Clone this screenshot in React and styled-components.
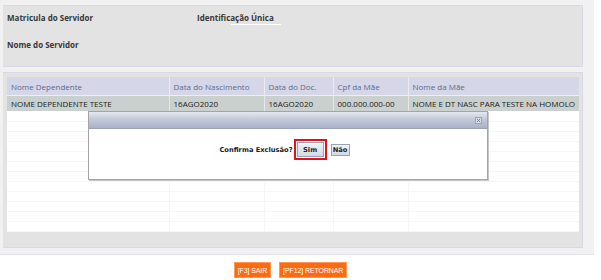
import React from "react";
import styled, { createGlobalStyle } from "styled-components";

const GlobalStyle = createGlobalStyle`
  html, body {
    margin: 0;
    padding: 0;
    background: #ffffff;
  }
  body {
    font-family: "Open Sans", "Liberation Sans", sans-serif;
  }
`;

const columns = [
  { title: "Nome Dependente", width: 162 },
  { title: "Data do Nascimento", width: 95 },
  { title: "Data do Doc.", width: 69 },
  { title: "Cpf da Mãe", width: 75 },
  { title: "Nome da Mãe", width: 171 },
];

const rows = [
  [
    "NOME DEPENDENTE TESTE",
    "16AGO2020",
    "16AGO2020",
    "000.000.000-00",
    "NOME E DT NASC PARA TESTE NA HOMOLO",
  ],
];

const App = () => {
  const emptyRows = Array.from({ length: 12 });

  return (
    <>
      <GlobalStyle />
      <Page>
        <InfoPanel>
          <InfoColumn>
            <Label>Matricula do Servidor</Label>
          </InfoColumn>
          <InfoColumn>
            <Label>Identificação Única</Label>
            <Field />
          </InfoColumn>
          <InfoColumn>
            <Label>Nome do Servidor</Label>
          </InfoColumn>
        </InfoPanel>

        <GridPanel>
          <Table>
            <colgroup>
              {columns.map((c) => (
                <col key={c.title} style={{ width: c.width }} />
              ))}
            </colgroup>
            <thead>
              <tr>
                {columns.map((c) => (
                  <Th key={c.title}>{c.title}</Th>
                ))}
              </tr>
            </thead>
            <tbody>
              {rows.map((r, i) => (
                <DataRow key={i}>
                  {r.map((cell, j) => (
                    <Td key={j}>{cell}</Td>
                  ))}
                </DataRow>
              ))}
              {emptyRows.map((_, i) => (
                <EmptyRow key={"e" + i}>
                  {columns.map((c) => (
                    <EmptyCell key={c.title} />
                  ))}
                </EmptyRow>
              ))}
            </tbody>
          </Table>
        </GridPanel>

        <Dialog>
          <TitleBar>
            <CloseIcon width="7" height="7" viewBox="0 0 7 7">
              <rect x="0.5" y="0.5" width="6" height="6" fill="#d6dae4" stroke="#9ea6b8" />
              <path d="M2 2 L5 5 M5 2 L2 5" stroke="#7d8598" strokeWidth="1" />
            </CloseIcon>
          </TitleBar>
          <DialogBody>
            <Question>Confirma Exclusão?</Question>
            <Focus>
              <DialogButton $big>Sim</DialogButton>
            </Focus>
            <DialogButton>Não</DialogButton>
          </DialogBody>
        </Dialog>
      </Page>

      <Footer>
        <ActionButton>[F3] SAIR</ActionButton>
        <ActionButton>[PF12] RETORNAR</ActionButton>
      </Footer>
    </>
  );
};

export default App;

const Page = styled.div`
  position: relative;
  width: 594px;
  box-sizing: border-box;
  padding: 5px 11px 6px 3px;
  background: #f1f1f1;
  border-bottom: 1px solid #e4e3ea;
  display: flex;
  flex-direction: column;
  gap: 5px;
`;

const InfoPanel = styled.div`
  height: 62px;
  box-sizing: border-box;
  background: #e3e3e3;
  border: 1px solid #dad8e2;
  border-left: none;
  display: grid;
  grid-template-columns: 190px 1fr;
  grid-template-rows: 27px 1fr;
  padding: 7px 0 0 4px;
`;

const InfoColumn = styled.div`
  display: flex;
  flex-direction: column;
`;

const Label = styled.span`
  font-family: "Open Sans", sans-serif;
  font-weight: 700;
  font-size: 8px;
  line-height: 10px;
  color: #383838;
`;

const Field = styled.div`
  width: 50px;
  height: 1px;
  margin: 1px 0 0 34px;
  background: #ffffff;
`;

const GridPanel = styled.div`
  height: 176px;
  box-sizing: border-box;
  background: #e3e3e3;
  border: 1px solid #dad8e2;
  border-left: none;
  padding: 4px 4px 14px 4px;
`;

const Table = styled.table`
  width: 572px;
  border-collapse: collapse;
  table-layout: fixed;
  background: #ffffff;
  font-family: "Open Sans", sans-serif;
  font-size: 8px;
`;

const Th = styled.th`
  height: 18px;
  padding: 0 4px;
  text-align: left;
  font-weight: 400;
  color: #5b6c8e;
  background: #d5d6e8;
  border-right: 1px solid #eceaf2;
  white-space: nowrap;
  overflow: hidden;
  &:last-child {
    border-right: none;
  }
`;

const DataRow = styled.tr`
  background: #c9d0ce;
`;

const Td = styled.td`
  height: 15px;
  padding: 0 4px;
  color: #1c1c1c;
  border-right: 1px solid #e4e8e6;
  border-top: 1px solid #eef0ef;
  white-space: nowrap;
  overflow: hidden;
  &:last-child {
    border-right: none;
  }
`;

const EmptyRow = styled.tr`
  height: 10px;
`;

const EmptyCell = styled.td`
  padding: 0;
  border-right: 1px solid #f6f6f6;
  border-bottom: 1px solid #f5f5f5;
  &:last-child {
    border-right: none;
  }
`;

const Dialog = styled.div`
  position: absolute;
  left: 88px;
  top: 111px;
  width: 400px;
  height: 69px;
  box-sizing: border-box;
  background: #ffffff;
  border: 1px solid #a4a4a8;
  box-shadow: 1px 1px 0 #c8c8cc;
  display: flex;
  flex-direction: column;
`;

const TitleBar = styled.div`
  height: 16px;
  flex-shrink: 0;
  background: linear-gradient(#e4e8f0 0%, #c3c9d9 45%, #a9b2c8 100%);
  border-bottom: 1px solid #9ca5ba;
  display: flex;
  align-items: center;
  justify-content: flex-end;
  padding-right: 5px;
`;

const CloseIcon = styled.svg`
  display: block;
`;

const DialogBody = styled.div`
  flex: 1;
  display: flex;
  align-items: center;
  justify-content: center;
  padding: 0 7px 9px 0;
  font-family: "DejaVu Sans", Verdana, sans-serif;
`;

const Question = styled.span`
  font-weight: 700;
  font-size: 6.7px;
  color: #1a1a1a;
  margin-right: 1px;
`;

const Focus = styled.span`
  display: flex;
  padding: 1px;
  border: 2px solid #e2121c;
  margin-right: 4px;
`;

const DialogButton = styled.button`
  box-sizing: border-box;
  height: ${(p) => (p.$big ? "15px" : "12px")};
  width: ${(p) => (p.$big ? "27px" : "19px")};
  padding: 0;
  background: linear-gradient(#f0f2f6, #d3d9e3);
  border: 1px solid #9aa3b4;
  font-family: "DejaVu Sans", Verdana, sans-serif;
  font-weight: 700;
  font-size: 6.7px;
  color: #1c2033;
`;

const Footer = styled.div`
  width: 581px;
  display: flex;
  justify-content: center;
  gap: 8px;
  padding-top: 7px;
`;

const ActionButton = styled.button`
  height: 16px;
  padding: 0 3px;
  background: #ff6a10;
  border: 1px solid #ff9a5c;
  color: #ffffff;
  font-family: "Liberation Sans Narrow", "Liberation Sans", sans-serif;
  font-size: 7px;
  letter-spacing: -0.1px;
`;
